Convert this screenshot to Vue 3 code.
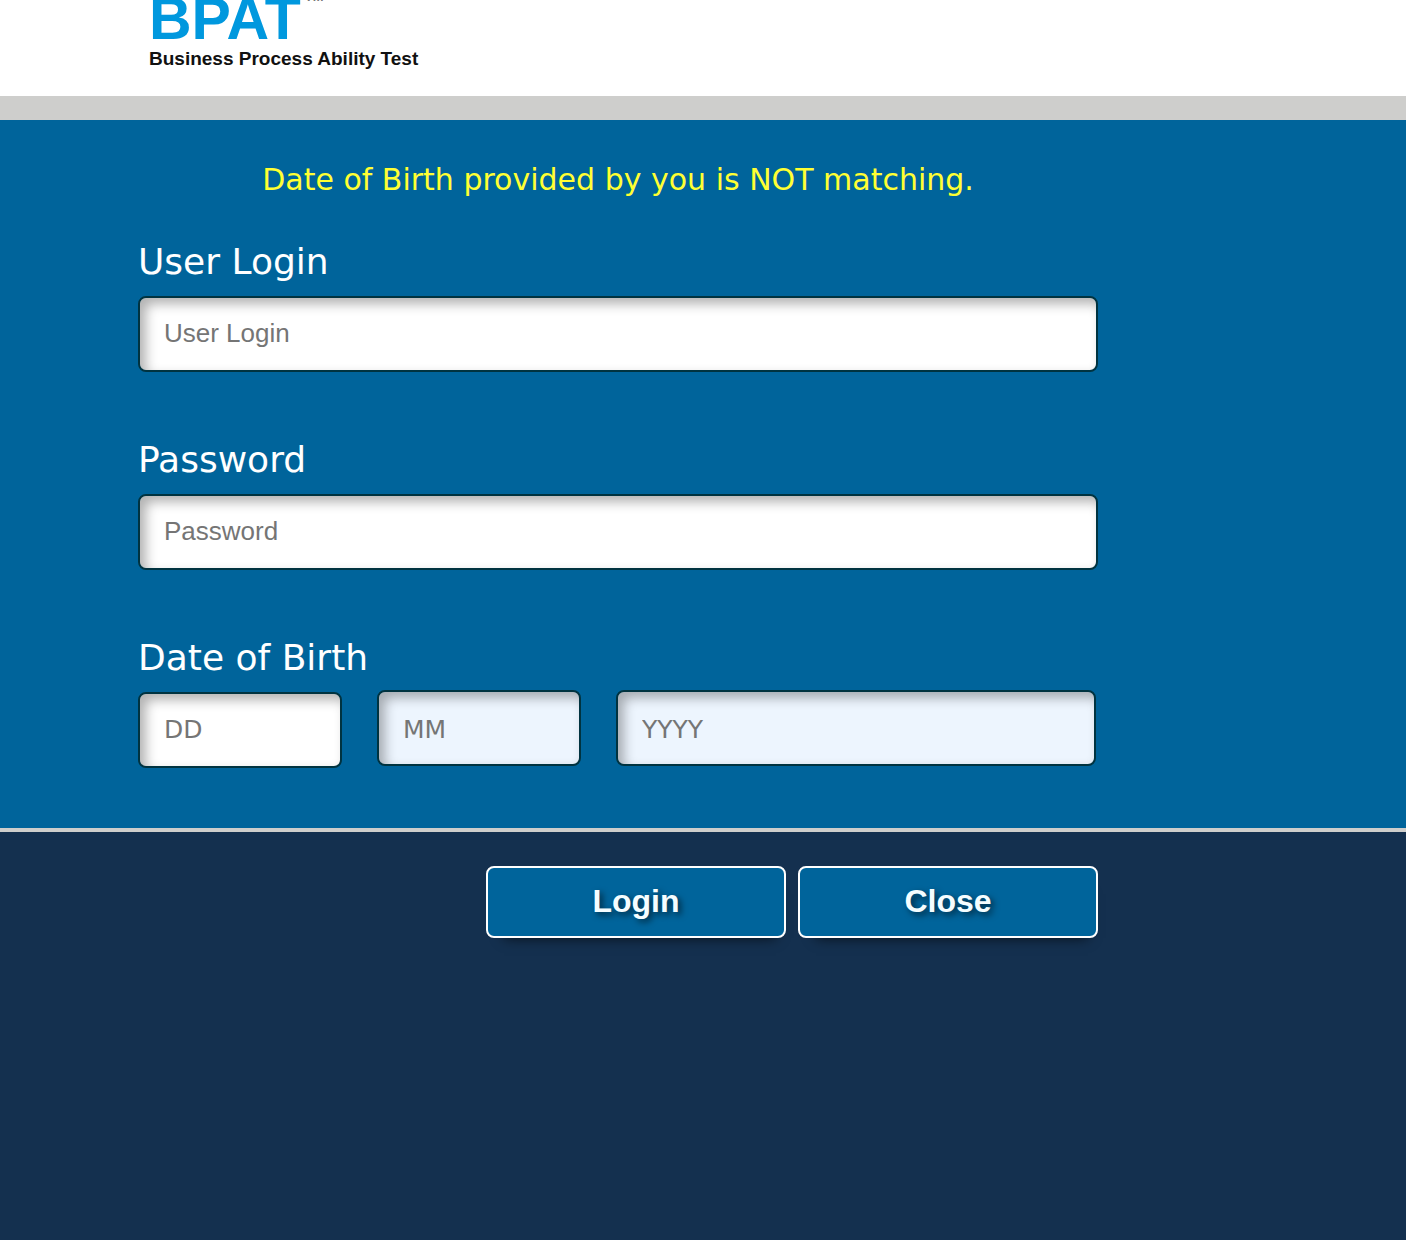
<script setup>
import { ref } from 'vue'

const login = ref('')
const password = ref('')
const day = ref('')
const month = ref('')
const year = ref('')
</script>

<template>
  <div class="page">
    <header class="header">
      <div class="logo">
        <div class="brand">BPAT<sup class="mark">TM</sup></div>
        <div class="tagline">Business Process Ability Test</div>
      </div>
    </header>
    <form @submit.prevent>
      <main class="panel">
        <div class="column">
          <p class="message" role="alert">Date of Birth provided by you is NOT matching.</p>
          <div class="field">
            <label class="label" for="login">User Login</label>
            <input id="login" v-model="login" class="box" type="text" placeholder="User Login">
          </div>
          <div class="field">
            <label class="label" for="password">Password</label>
            <input id="password" v-model="password" class="box" type="password" placeholder="Password">
          </div>
          <div class="field birth" role="group" aria-labelledby="dob">
            <label id="dob" class="label" for="day">Date of Birth</label>
            <div class="date">
              <input id="day" v-model="day" class="box part" type="text" placeholder="DD">
              <input v-model="month" class="box part tinted" type="text" placeholder="MM" aria-label="Month">
              <input v-model="year" class="box part tinted" type="text" placeholder="YYYY" aria-label="Year">
            </div>
          </div>
        </div>
      </main>
      <div class="column actions">
        <button class="button" type="submit">Login</button>
        <button class="button" type="button">Close</button>
      </div>
    </form>
  </div>
</template>

<style>
body {
  margin: 0;
  background: #14304f;
}
</style>

<style scoped>
.page {
  min-height: 100vh;
  background: #14304f;
  font-family: Verdana, "DejaVu Sans", sans-serif;
}
.header {
  display: flex;
  align-items: flex-end;
  height: 96px;
  box-sizing: border-box;
  padding: 0 149px 25px;
  overflow: hidden;
  background: #fff;
}
.logo {
  font-family: "Liberation Sans", Arial, sans-serif;
  font-weight: 700;
  white-space: nowrap;
}
.brand {
  display: flex;
  align-items: flex-start;
  gap: 4px;
  color: #0098de;
  font-size: 59px;
  line-height: 56px;
}
.mark {
  color: #777;
  font-size: 13px;
  line-height: 12px;
}
.tagline {
  color: #111;
  font-size: 19px;
  line-height: 24px;
}
.panel {
  padding-bottom: 60px;
  background: #00649b;
  border-top: 24px solid #cececc;
  border-bottom: 4px solid #cececc;
}
.column {
  max-width: 960px;
  margin: 0 138px;
}
.message {
  margin: 0;
  padding: 40px 0;
  color: #ffff33;
  font-size: 30px;
  line-height: 40px;
  text-align: center;
}
.field {
  display: flex;
  flex-direction: column;
  gap: 12px;
}
.field + .field {
  margin-top: 66px;
}
.birth {
  gap: 10px;
}
.label {
  color: #fff;
  font-size: 36px;
  line-height: 44px;
}
.box {
  width: 100%;
  min-width: 0;
  height: 76px;
  box-sizing: border-box;
  margin: 0;
  padding: 0 24px 2px;
  color: #222;
  background: #fff;
  border: 2px solid #003340;
  border-radius: 8px;
  box-shadow: inset 6px 6px 12px rgba(0, 0, 0, 0.3);
  font-family: "Liberation Sans", Arial, sans-serif;
  font-size: 26px;
  outline: 0;
}
.box::placeholder {
  color: #757575;
  opacity: 1;
}
.date {
  display: grid;
  grid-template-columns: 17fr 17fr 40fr;
  align-items: baseline;
  gap: 35px;
  padding-right: 2px;
}
.part {
  font-family: Verdana, "DejaVu Sans", sans-serif;
  font-size: 25px;
}
.tinted {
  padding: 2px 24px 0;
  background: #edf5fe;
}
.actions {
  display: flex;
  justify-content: flex-end;
  gap: 12px;
  padding: 34px 0;
}
.button {
  width: 300px;
  height: 72px;
  padding: 0 0 2px;
  color: #f5fdff;
  background: #00649b;
  border: 2px solid #fff;
  border-radius: 8px;
  box-shadow: 4px 14px 12px -14px rgba(0, 0, 0, 0.7);
  font-family: "Liberation Sans", Arial, sans-serif;
  font-size: 32px;
  font-weight: 700;
  text-shadow: 3px 3px 6px rgba(0, 0, 0, 0.6);
  cursor: pointer;
}
</style>
